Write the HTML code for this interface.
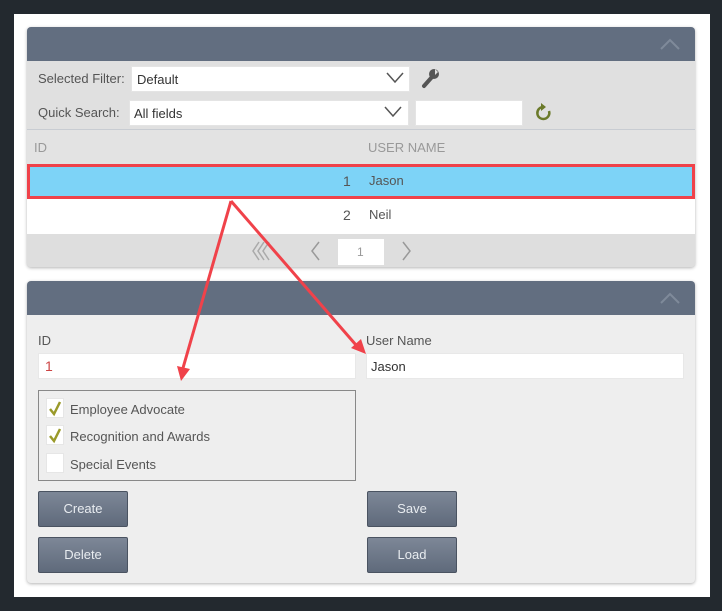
<!DOCTYPE html>
<html><head><style>
*{box-sizing:border-box;margin:0;padding:0}
body{width:722px;height:611px;background:#23292f;font-family:"Liberation Sans",sans-serif;position:relative;overflow:hidden}
.abs{position:absolute}
.canvas{left:14px;top:14px;width:696px;height:583px;background:#fff}
.hdr{background:#626e80;border-radius:4px 4px 0 0}
.t{position:absolute;font-size:13px;color:#555;white-space:nowrap}
.box{position:absolute;background:#fff;border:1px solid #e4e4e4}
.btn{position:absolute;width:90px;height:36px;background:linear-gradient(#7d8797,#5f6a7b);border:1px solid #4a5361;border-radius:2px;color:#e8ecf0;font-size:13px;text-align:center;line-height:34px}
.cb{position:absolute;left:46px;width:18px;height:20px;background:#fff;border:1px solid #e6e6e6}
</style></head><body>
<div class="abs canvas"></div>
<div class="abs" style="left:27px;top:27px;width:668px;height:240px;background:#e0e0e0;border-radius:4px;box-shadow:0 1px 3px rgba(0,0,0,.3)"></div>
<div class="abs hdr" style="left:27px;top:27px;width:668px;height:34px"></div>
<svg class="abs" style="left:660px;top:38px" width="20" height="12"><path d="M1 11 L10 2 L19 11" stroke="#7f8a9a" stroke-width="2" fill="none"/></svg>
<div class="t" style="left:38px;top:71px">Selected Filter:</div>
<div class="box" style="left:131px;top:66px;width:279px;height:26px"></div>
<div class="t" style="left:137px;top:72px;color:#333">Default</div>
<svg class="abs" style="left:386px;top:72px" width="18" height="12"><path d="M1 1 L9 10 L17 1" stroke="#555" stroke-width="1.5" fill="none"/></svg>
<svg class="abs" style="left:421px;top:67px" width="20" height="22"><path d="M3 19 L11 10" stroke="#555" stroke-width="4" stroke-linecap="round"/><circle cx="13" cy="7" r="5" fill="#555"/><path d="M14 2 L17 5 L14 8" fill="#e0e0e0"/></svg>
<div class="t" style="left:38px;top:105px">Quick Search:</div>
<div class="box" style="left:129px;top:100px;width:280px;height:26px"></div>
<div class="t" style="left:134px;top:106px;color:#333">All fields</div>
<svg class="abs" style="left:384px;top:106px" width="18" height="12"><path d="M1 1 L9 10 L17 1" stroke="#555" stroke-width="1.5" fill="none"/></svg>
<div class="box" style="left:415px;top:100px;width:108px;height:26px"></div>
<svg class="abs" style="left:534px;top:102px" width="20" height="22"><path d="M15 9 A6 6 0 1 1 9 5" stroke="#6b7a2a" stroke-width="2.5" fill="none"/><path d="M7 1 L12 5 L7 9 Z" fill="#6b7a2a"/></svg>
<div class="abs" style="left:27px;top:129px;width:668px;height:1px;background:#c8ccd2"></div>
<div class="abs" style="left:27px;top:130px;width:668px;height:34px;background:#e3e3e3"></div>
<div class="t" style="left:34px;top:140px;color:#999">ID</div>
<div class="t" style="left:368px;top:140px;color:#999">USER NAME</div>
<div class="abs" style="left:27px;top:164px;width:668px;height:35px;background:#7dd3f7;border:3px solid #f0424a"></div>
<div class="t" style="left:343px;top:173px;font-size:14px">1</div>
<div class="t" style="left:369px;top:173px">Jason</div>
<div class="abs" style="left:27px;top:199px;width:668px;height:35px;background:#fff"></div>
<div class="t" style="left:343px;top:207px;font-size:14px">2</div>
<div class="t" style="left:369px;top:207px">Neil</div>
<div class="abs" style="left:27px;top:234px;width:668px;height:33px;background:#dedede;border-radius:0 0 4px 4px"></div>
<svg class="abs" style="left:251px;top:241px" width="22" height="20"><path d="M8 1 L2 10 L8 19 M13 1 L7 10 L13 19 M18 1 L12 10 L18 19" stroke="#aaa" stroke-width="1.5" fill="none"/></svg>
<svg class="abs" style="left:309px;top:241px" width="12" height="20"><path d="M10 1 L3 10 L10 19" stroke="#999" stroke-width="1.5" fill="none"/></svg>
<div class="box" style="left:338px;top:239px;width:46px;height:26px;border:none"></div>
<div class="t" style="left:357px;top:245px;color:#999;font-size:12px">1</div>
<svg class="abs" style="left:401px;top:241px" width="12" height="20"><path d="M2 1 L9 10 L2 19" stroke="#999" stroke-width="1.5" fill="none"/></svg>
<div class="abs" style="left:27px;top:281px;width:668px;height:302px;background:#eeeeee;border-radius:4px;box-shadow:0 1px 3px rgba(0,0,0,.3)"></div>
<div class="abs hdr" style="left:27px;top:281px;width:668px;height:34px"></div>
<svg class="abs" style="left:660px;top:292px" width="20" height="12"><path d="M1 11 L10 2 L19 11" stroke="#7f8a9a" stroke-width="2" fill="none"/></svg>
<div class="t" style="left:38px;top:333px">ID</div>
<div class="t" style="left:366px;top:333px">User Name</div>
<div class="box" style="left:38px;top:353px;width:318px;height:26px;border-color:#e8e8e8"></div>
<div class="t" style="left:45px;top:358px;font-size:14px;color:#c44">1</div>
<div class="box" style="left:366px;top:353px;width:318px;height:26px;border-color:#e8e8e8"></div>
<div class="t" style="left:371px;top:359px;color:#333">Jason</div>
<div class="abs" style="left:38px;top:390px;width:318px;height:91px;border:1px solid #888"></div>
<div class="cb" style="top:398px"></div><div class="cb" style="top:425px"></div><div class="cb" style="top:453px"></div>
<svg class="abs" style="left:46px;top:398px" width="18" height="48"><g stroke="#9a9a2a" stroke-width="2.5" fill="none"><path d="M4 11 L8 16 L14 4"/><path d="M4 38 L8 43 L14 31"/></g></svg>
<div class="t" style="left:70px;top:402px">Employee Advocate</div>
<div class="t" style="left:70px;top:429px">Recognition and Awards</div>
<div class="t" style="left:70px;top:457px">Special Events</div>
<div class="btn" style="left:38px;top:491px">Create</div>
<div class="btn" style="left:38px;top:537px">Delete</div>
<div class="btn" style="left:367px;top:491px">Save</div>
<div class="btn" style="left:367px;top:537px">Load</div>
<svg class="abs" style="left:0;top:0" width="722" height="611">
<g stroke="#f0424a" stroke-width="3" fill="none"><path d="M231 201 L183 368"/><path d="M231 201 L356 345"/></g>
<path d="M177 366 L181 381 L190 369 Z" fill="#f0424a"/>
<path d="M351 348 L366 354 L361 339 Z" fill="#f0424a"/>
</svg>
</body></html>
